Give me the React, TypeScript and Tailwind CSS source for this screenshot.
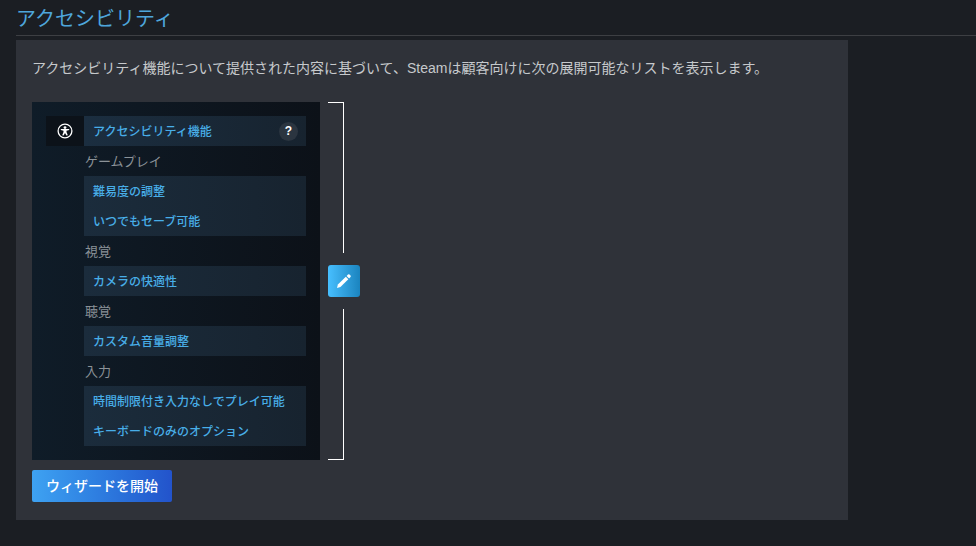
import React from "react";

const font = { fontFamily: '"Liberation Sans", "Noto Sans CJK JP", sans-serif' };

function Row({ children }: { children: React.ReactNode }) {
  return <div className="h-[30px] flex items-center pl-[9px] pt-[2px] text-[12px] font-medium text-[#48aee8] leading-none">{children}</div>;
}
function Heading({ children }: { children: React.ReactNode }) {
  return <div className="h-[30px] flex items-center pl-px text-[13px] text-[#8b9298] leading-none">{children}</div>;
}
function Group({ items }: { items: string[] }) {
  return (
    <div className="bg-gradient-to-r from-[#1b2c3c] to-[#17232f]">
      {items.map((t) => (
        <Row key={t}>{t}</Row>
      ))}
    </div>
  );
}

export default function App() {
  return (
    <div className="h-[546px] w-[976px] overflow-hidden bg-[#1b1e23] pl-4" style={font}>
      <div className="h-[36px] w-[960px] border-b border-[#3d3f43] flex items-center">
        <h1 className="text-[20px] font-normal leading-none text-[#4ea6dc] pt-[3px]">アクセシビリティ</h1>
      </div>
      <div className="mt-1 h-[480px] w-[832px] bg-[#2f3239] px-4">
        <p className="h-[62px] flex items-center text-[14px] leading-none text-[#c6c9cc] pb-[6px]">
          アクセシビリティ機能について提供された内容に基づいて、Steamは顧客向けに次の展開可能なリストを表示します。
        </p>
        <div className="flex gap-2">
          <div className="w-[288px] h-[358px] bg-gradient-to-r from-[#0f1c28] to-[#0c1118] p-[14px] flex">
            <div className="w-[38px] h-[30px] shrink-0 bg-[#0c1219] flex items-center justify-center">
              <svg width="16" height="16" viewBox="0 0 16 16" fill="none">
                <circle cx="8" cy="8" r="6.9" stroke="#fff" strokeWidth="1.3" />
                <circle cx="8" cy="4.6" r="1.4" fill="#fff" />
                <path d="M3.8 6 L12.2 6 L12.2 7 L9.5 7.7 L9.5 9 L10.8 12.2 L9.4 12.6 L8 9.9 L6.6 12.6 L5.2 12.2 L6.5 9 L6.5 7.7 L3.8 7 Z" fill="#fff" />
              </svg>
            </div>
            <div className="w-[222px]">
              <div className="h-[30px] flex items-center justify-between pl-[9px] pr-[8px] bg-gradient-to-r from-[#1b2e40] to-[#17232f] text-[12px] font-medium text-[#48aee8] leading-none">
                <span className="pt-[2px]">アクセシビリティ機能</span>
                <span className="w-[19px] h-[19px] rounded-full bg-[#2b3540] text-white text-[12px] font-bold flex items-center justify-center">?</span>
              </div>
              <Heading>ゲームプレイ</Heading>
              <Group items={["難易度の調整", "いつでもセーブ可能"]} />
              <Heading>視覚</Heading>
              <Group items={["カメラの快適性"]} />
              <Heading>聴覚</Heading>
              <Group items={["カスタム音量調整"]} />
              <Heading>入力</Heading>
              <Group items={["時間制限付き入力なしでプレイ可能", "キーボードのみのオプション"]} />
            </div>
          </div>
          <div className="w-[32px] h-[358px] flex flex-col items-start gap-3">
            <div className="flex-1 w-4 border-t border-r border-white" />
            <div className="w-8 h-8 rounded-[3px] bg-gradient-to-r from-[#47bfff] to-[#1a84bf] flex items-center justify-center">
              <svg width="16" height="16" viewBox="0 0 16 16" fill="#fff">
                <path d="M1 15 L1.9 11.6 L9.8 3.7 L12.3 6.2 L4.4 14.1 Z" />
                <path d="M10.6 2.9 L12 1.5 Q12.8 0.9 13.5 1.5 L14.5 2.5 Q15.1 3.2 14.5 4 L13.1 5.4 Z" />
              </svg>
            </div>
            <div className="flex-1 w-4 border-b border-r border-white" />
          </div>
        </div>
        <button className="mt-[10px] w-[140px] h-8 rounded-[2px] bg-gradient-to-r from-[#3ea2f2] to-[#2353cb] text-white text-[14px] font-medium leading-none flex items-center justify-center pb-px">
          ウィザードを開始
        </button>
      </div>
    </div>
  );
}
